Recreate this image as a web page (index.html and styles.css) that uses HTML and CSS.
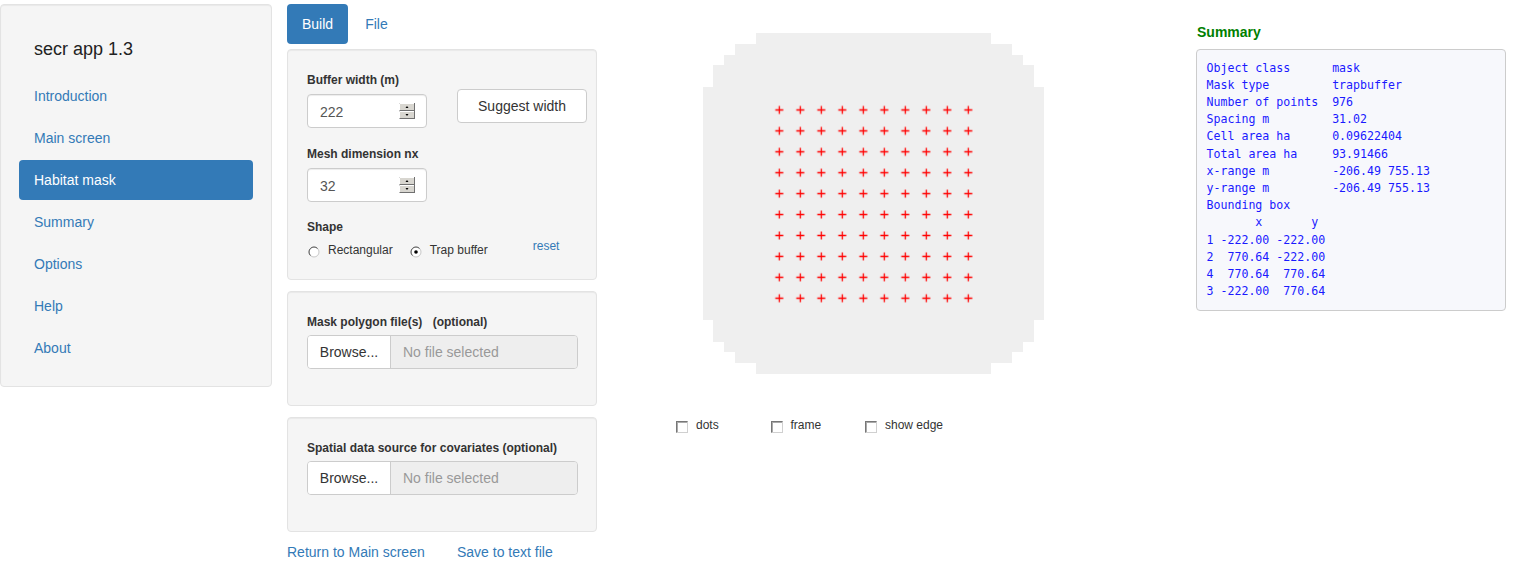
FILE: index.html
```html
<!DOCTYPE html>
<html>
<head>
<meta charset="utf-8">
<title>secr app 1.3</title>
<link rel="stylesheet" href="styles.css">
</head>
<body>
<div class="page">
  <aside class="sidebar">
    <h4 class="app-title">secr app 1.3</h4>
    <ul class="nav-pills">
      <li><a href="#">Introduction</a></li>
      <li><a href="#">Main screen</a></li>
      <li class="active"><a href="#">Habitat mask</a></li>
      <li><a href="#">Summary</a></li>
      <li><a href="#">Options</a></li>
      <li><a href="#">Help</a></li>
      <li><a href="#">About</a></li>
    </ul>
  </aside>

  <main class="main">
    <section class="left-col">
      <ul class="tabs">
        <li class="active"><a href="#">Build</a></li>
        <li><a href="#">File</a></li>
      </ul>

      <div class="well well-build">
        <div class="build-row">
          <div class="group group-buffer">
            <label class="ctl-label">Buffer width (m)</label>
            <div class="num-input">
              <span class="num-value">222</span>
              <svg class="spin" width="16" height="16" viewBox="0 0 16 16">
                <rect x="0.5" y="0.5" width="15" height="7" fill="#d8d6d0" stroke="#707070"/>
                <path d="M0.5 7.5V0.5H15" fill="none" stroke="#fff"/>
                <rect x="0.5" y="8.5" width="15" height="7" fill="#d8d6d0" stroke="#707070"/>
                <path d="M0.5 15.5V8.5H15" fill="none" stroke="#fff"/>
                <path d="M6.5 5h3l-1.5-2z" fill="#000"/>
                <path d="M6.5 11h3l-1.5 2z" fill="#000"/>
              </svg>
            </div>
          </div>
          <button class="btn-suggest">Suggest width</button>
        </div>

        <div class="group group-mesh">
          <label class="ctl-label">Mesh dimension nx</label>
          <div class="num-input">
            <span class="num-value">32</span>
            <svg class="spin" width="16" height="16" viewBox="0 0 16 16">
              <rect x="0.5" y="0.5" width="15" height="7" fill="#d8d6d0" stroke="#707070"/>
              <path d="M0.5 7.5V0.5H15" fill="none" stroke="#fff"/>
              <rect x="0.5" y="8.5" width="15" height="7" fill="#d8d6d0" stroke="#707070"/>
              <path d="M0.5 15.5V8.5H15" fill="none" stroke="#fff"/>
              <path d="M6.5 5h3l-1.5-2z" fill="#000"/>
              <path d="M6.5 11h3l-1.5 2z" fill="#000"/>
            </svg>
          </div>
        </div>

        <label class="ctl-label">Shape</label>
        <div class="shape-row">
          <span class="radio">
            <svg width="12" height="12" viewBox="0 0 12 12">
              <circle cx="6" cy="6" r="5" fill="#fff" stroke="#c8c8c8"/>
              <path d="M2.46 9.54A5 5 0 0 1 9.54 2.46" fill="none" stroke="#555"/>
            </svg>
            Rectangular
          </span>
          <span class="radio">
            <svg width="12" height="12" viewBox="0 0 12 12">
              <circle cx="6" cy="6" r="5" fill="#fff" stroke="#c8c8c8"/>
              <path d="M2.46 9.54A5 5 0 0 1 9.54 2.46" fill="none" stroke="#555"/>
              <circle cx="6" cy="6" r="1.8" fill="#000"/>
            </svg>
            Trap buffer
          </span>
          <a class="reset" href="#">reset</a>
        </div>
      </div>

      <div class="well well-file">
        <label class="ctl-label file-label">Mask polygon file(s) <span class="opt">(optional)</span></label>
        <div class="file-input">
          <span class="browse">Browse...</span>
          <span class="file-name">No file selected</span>
        </div>
      </div>

      <div class="well well-file">
        <label class="ctl-label file-label">Spatial data source for covariates (optional)</label>
        <div class="file-input">
          <span class="browse">Browse...</span>
          <span class="file-name">No file selected</span>
        </div>
      </div>

      <div class="bottom-links">
        <a href="#" class="link-return">Return to Main screen</a>
        <a href="#">Save to text file</a>
      </div>
    </section>

    <section class="plot-col">
      <svg class="plot" width="596" height="412" viewBox="0 0 596 412">
        <defs>
          <pattern id="cross" patternUnits="userSpaceOnUse" x="168.8" y="95.5" width="21" height="20.92">
            <path d="M6.5 10.46H14.5M10.5 6.46V14.46" stroke="#ff0000" stroke-width="1.3" fill="none"/>
          </pattern>
        </defs>
        <path d="M156 29H391V40H412V51H423V61H434V83H444V316H434V338H423V348H412V359H391V370H156V359H135V348H124V338H113V316H103V83H113V61H124V51H135V40H156Z" fill="#efefef"/>
        <rect x="168.8" y="95.5" width="210" height="209.2" fill="url(#cross)"/>
      </svg>
      <div class="check-row">
        <span class="check"><span class="box"></span>dots</span>
        <span class="check"><span class="box"></span>frame</span>
        <span class="check"><span class="box"></span>show edge</span>
      </div>
    </section>

    <section class="summary-col">
      <h4 class="summary-title">Summary</h4>
      <pre class="summary-box">Object class      mask
Mask type         trapbuffer
Number of points  976
Spacing m         31.02
Cell area ha      0.09622404
Total area ha     93.91466
x-range m         -206.49 755.13
y-range m         -206.49 755.13
Bounding box
       x       y
1 -222.00 -222.00
2  770.64 -222.00
4  770.64  770.64
3 -222.00  770.64</pre>
    </section>
  </main>
</div>
</body>
</html>
```

FILE: styles.css
```css
html, body {
  margin: 0;
  padding: 0;
  background: #fff;
}

body {
  font-family: "Liberation Sans", Arial, sans-serif;
  font-size: 14px;
  line-height: 20px;
  color: #333;
}

a {
  color: #337ab7;
  text-decoration: none;
}

.page {
  display: flex;
  align-items: flex-start;
  padding-top: 4px;
}

/* ---------- sidebar ---------- */
.sidebar {
  width: 272px;
  box-sizing: border-box;
  background: #f5f5f5;
  border: 1px solid #e3e3e3;
  border-radius: 4px;
  box-shadow: inset 0 1px 1px rgba(0, 0, 0, 0.05);
  padding: 0 18px 18px;
  flex: none;
}

.app-title {
  margin: 34px 15px 17px;
  font-size: 18px;
  font-weight: normal;
  line-height: 20px;
  color: #222;
}

.nav-pills {
  list-style: none;
  margin: 0;
  padding: 0;
}

.nav-pills li + li {
  margin-top: 2px;
}

.nav-pills a {
  display: block;
  padding: 10px 15px;
  border-radius: 4px;
}

.nav-pills .active a {
  background: #337ab7;
  color: #fff;
}

/* ---------- main ---------- */
.main {
  display: flex;
  align-items: flex-start;
  margin-left: 15px;
}

.left-col {
  width: 310px;
  margin-right: 3px;
  flex: none;
}

.tabs {
  list-style: none;
  margin: 0 0 5px;
  padding: 0;
  display: flex;
}

.tabs li + li {
  margin-left: 2px;
}

.tabs a {
  display: block;
  padding: 10px 15px;
  border-radius: 4px;
}

.tabs .active a {
  background: #337ab7;
  color: #fff;
}

.well {
  box-sizing: border-box;
  background: #f5f5f5;
  border: 1px solid #e3e3e3;
  border-radius: 4px;
  box-shadow: inset 0 1px 1px rgba(0, 0, 0, 0.05);
  padding: 22px 19px 20px;
}

.well + .well {
  margin-top: 11px;
}

.ctl-label {
  display: block;
  font-size: 12px;
  font-weight: bold;
  line-height: 17px;
  margin-bottom: 5px;
  color: #333;
}

.build-row {
  display: flex;
  align-items: flex-start;
}

.group-buffer {
  width: 150px;
  flex: none;
  margin-bottom: 18px;
}

.group-mesh {
  margin-bottom: 17px;
}

.num-input {
  box-sizing: border-box;
  width: 120px;
  height: 34px;
  background: #fff;
  border: 1px solid #ccc;
  border-radius: 4px;
  box-shadow: inset 0 1px 1px rgba(0, 0, 0, 0.075);
  display: flex;
  align-items: center;
  padding: 0 12px;
  font-size: 14px;
  color: #555;
}

.num-value {
  flex: 1;
  padding-top: 1px;
}

.spin {
  display: block;
  margin-right: -1px;
}

.btn-suggest {
  flex: none;
  margin-top: 17px;
  box-sizing: border-box;
  width: 130px;
  height: 34px;
  background: #fff;
  border: 1px solid #ccc;
  border-radius: 4px;
  font-family: "Liberation Sans", Arial, sans-serif;
  font-size: 14px;
  color: #333;
  padding: 0;
}

.shape-row {
  display: flex;
  align-items: flex-start;
  margin-top: 6px;
  font-size: 12px;
  line-height: 17px;
  height: 17px;
}

.radio {
  display: flex;
  align-items: center;
  margin-right: 17px;
}

.radio svg {
  margin: 3px 8px 0 0;
  display: block;
}

.radio:first-child svg {
  margin-left: 1px;
}

.reset {
  margin-left: 28px;
  margin-top: -4px;
  font-size: 12px;
}

.well-file {
  padding-bottom: 36px;
}

.file-label {
  margin-bottom: 4px;
}

.opt {
  margin-left: 7px;
}

.file-input {
  display: flex;
  box-sizing: border-box;
  width: 271px;
  height: 34px;
  border: 1px solid #ccc;
  border-radius: 4px;
  overflow: hidden;
  font-size: 14px;
}

.browse {
  width: 82px;
  flex: none;
  background: #fff;
  border-right: 1px solid #ccc;
  text-align: center;
  line-height: 32px;
  color: #333;
}

.file-name {
  flex: 1;
  background: #eee;
  color: #999;
  line-height: 32px;
  padding-left: 12px;
}

.bottom-links {
  display: flex;
  margin-top: 10px;
}

.link-return {
  width: 170px;
}

/* ---------- plot ---------- */
.plot-col {
  width: 596px;
  flex: none;
}

.plot {
  display: block;
}

.check-row {
  display: flex;
  margin-top: 1px;
  padding-left: 76px;
  font-size: 12px;
  line-height: 17px;
  color: #333;
}

.check {
  display: flex;
  align-items: flex-start;
  width: 94.5px;
}

.box {
  box-sizing: border-box;
  width: 12px;
  height: 12px;
  margin: 4px 8px 0 0;
  background: #fff;
  border: 1px solid;
  border-color: #777 #d0d0d0 #d0d0d0 #777;
  box-shadow: inset 1px 1px 0 #aaa;
}

/* ---------- summary ---------- */
.summary-col {
  width: 310px;
  flex: none;
}

.summary-title {
  margin: 20px 0 8px 1px;
  font-size: 14px;
  line-height: 17px;
  font-weight: bold;
  color: #008000;
}

.summary-box {
  box-sizing: border-box;
  margin: 0;
  padding: 9.5px;
  background: #f7f8fc;
  border: 1px solid #ccc;
  border-radius: 4px;
  font-family: "DejaVu Sans Mono", "Liberation Mono", monospace;
  font-size: 11.6px;
  line-height: 17.2px;
  color: #1a1aff;
  white-space: pre;
}
```
